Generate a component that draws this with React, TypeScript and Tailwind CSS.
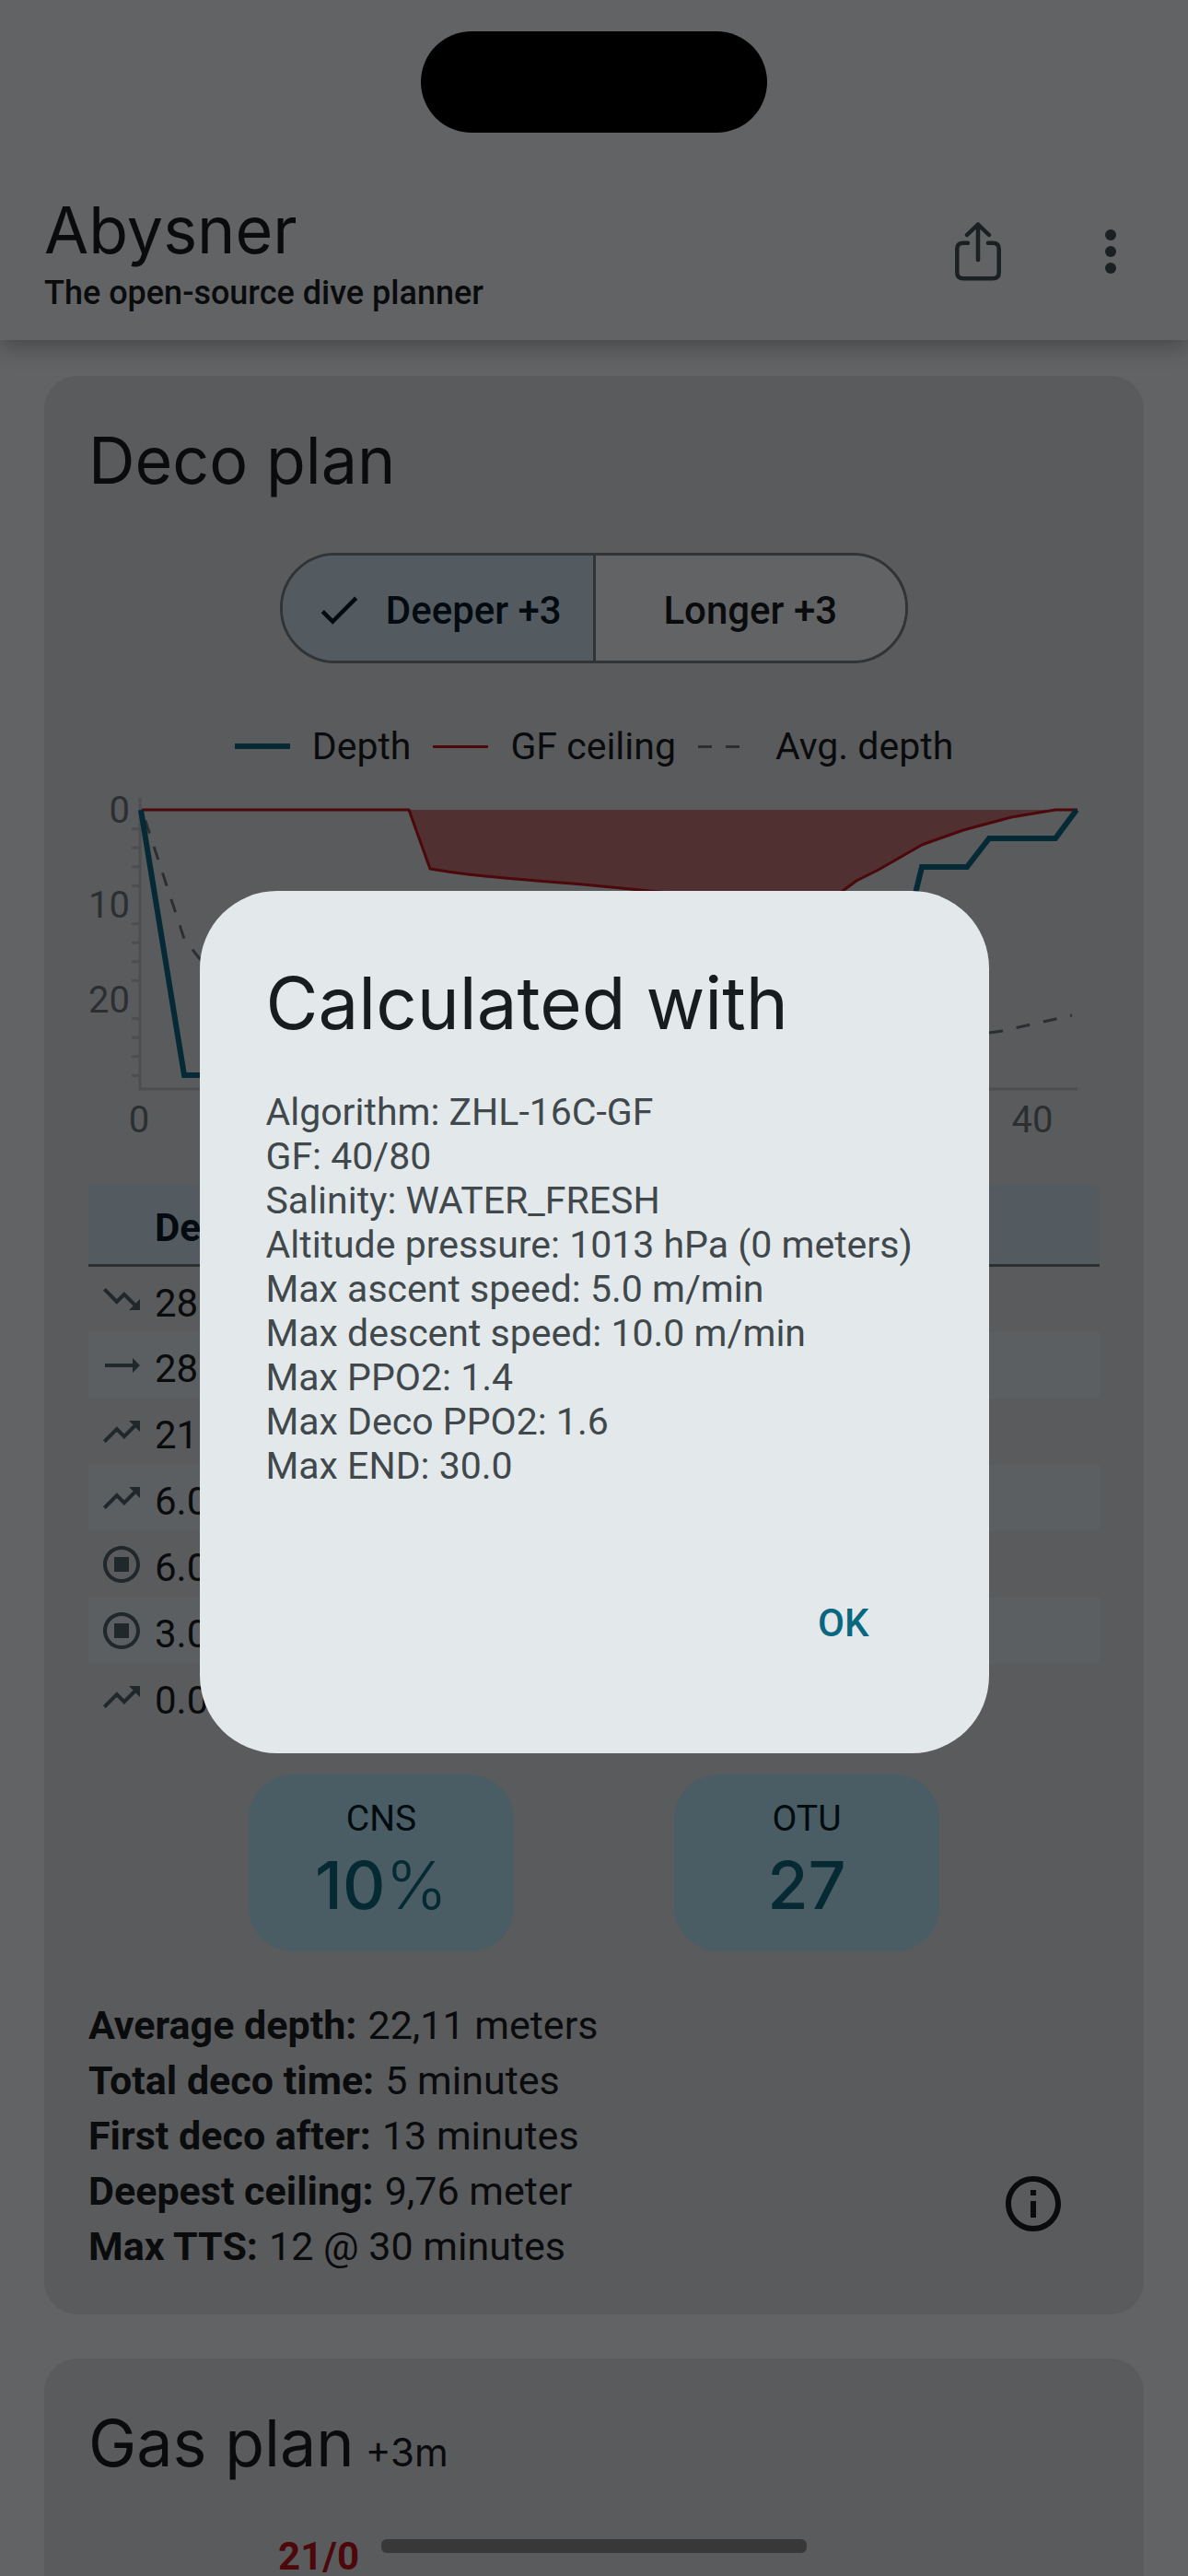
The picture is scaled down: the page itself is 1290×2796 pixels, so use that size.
import React from "react";

const rows: [string, string][] = [
  ["down", "28"],
  ["flat", "28"],
  ["up", "21"],
  ["up", "6.0"],
  ["stop", "6.0"],
  ["stop", "3.0"],
  ["up", "0.0"],
];

const iconPaths: Record<string, string> = {
  down: "M16 18l2.29-2.29-4.88-4.88-4 4L2 7.41 3.41 6l6 6 4-4 6.3 6.29L22 12v6z",
  flat: "M22 12l-4-4v3H3v2h15v3z",
  up: "M16 6l2.29 2.29-4.88 4.88-4-4L2 16.59 3.41 18l6-6 4 4 6.3-6.29L22 12V6z",
  stop: "M12 2C6.48 2 2 6.48 2 12s4.48 10 10 10 10-4.48 10-10S17.52 2 12 2zm0 18c-4.42 0-8-3.58-8-8s3.58-8 8-8 8 3.58 8 8-3.58 8-8 8zm4-4H8V8h8v8z",
};

const settings = [
  "Algorithm: ZHL-16C-GF",
  "GF: 40/80",
  "Salinity: WATER_FRESH",
  "Altitude pressure: 1013 hPa (0 meters)",
  "Max ascent speed: 5.0 m/min",
  "Max descent speed: 10.0 m/min",
  "Max PPO2: 1.4",
  "Max Deco PPO2: 1.6",
  "Max END: 30.0",
];

const stats = [
  ["Average depth:", "22,11 meters"],
  ["Total deco time:", "5 minutes"],
  ["First deco after:", "13 minutes"],
  ["Deepest ceiling:", "9,76 meter"],
  ["Max TTS:", "12 @ 30 minutes"],
];

const ticks = Array.from({ length: 14 }, (_, i) => i + 1).filter((i) => i % 5 !== 0);

function Chart() {
  return (
    <svg viewBox="0 0 1098 400" className="block w-full overflow-visible" role="img" aria-label="Dive profile" fontFamily="Roboto, sans-serif" fontSize="40">
      <path d="M56 5V321H1074" fill="none" stroke="#4d4e50" strokeWidth="3" />
      {ticks.map((i) => (
        <path key={i} d={`M47 ${18 + i * 20.6}h9`} stroke="#4d4e50" strokeWidth="3" />
      ))}
      <g fill="#2b2f31" textAnchor="end">
        <text x="45" y="32">0</text>
        <text x="45" y="135">10</text>
        <text x="45" y="238">20</text>
      </g>
      <g fill="#2b2f31" textAnchor="middle">
        <text x="55" y="368">0</text>
        <text x="1025" y="368">40</text>
      </g>
      <path d="M348 18L371 82Q400 87 431 90T537 99L620 107L740 118H800L819 106L834 95L858 83L905 56L950 40L1002 26L1050 18Z" fill="#503031" />
      <path d="M58 18L104 158L152 220L400 285L800 285L992 258L1068 241" fill="none" stroke="#2b2f31" strokeWidth="3" strokeDasharray="15 15" strokeDashoffset="18" />
      <path d="M58 18H348L371 82Q400 87 431 90T537 99L620 107L740 118H800L819 106L834 95L858 83L905 56L950 40L1002 26L1050 18H1074" fill="none" stroke="#4c080b" strokeWidth="3" strokeLinejoin="round" />
      <path d="M57 18L104 306H850L905 80H954L978 49H1050L1073 18" fill="none" stroke="#052a35" strokeWidth="6" />
    </svg>
  );
}

function Meter({ label, value, unit }: { label: string; value: string; unit?: string }) {
  return (
    <div className="flex h-[192px] w-[288px] flex-col items-center rounded-[48px] bg-[#4a5d64] pt-6">
      <span className="text-[39px] leading-[48px] text-[#020b0f]">{label}</span>
      <span className="font-[Inter,sans-serif] text-[72px] leading-[96px] font-medium text-[#052a33]">
        {value}
        {unit && <span className="font-light">{unit}</span>}
      </span>
    </div>
  );
}

export default function App() {
  return (
    <div className="relative h-screen overflow-hidden bg-[#626365] font-[Roboto,sans-serif] text-[#0a0b0c]">
      <header className="relative bg-[#626365] shadow-[0_6px_24px_rgba(0,0,0,0.3)]">
        <div className="flex justify-center pt-[34px]">
          <div className="h-[110px] w-[376px] rounded-full bg-black" />
        </div>
        <div className="flex h-[225px] items-start justify-between pt-[66px] pr-[60px] pl-12">
          <div>
            <h1 className="font-[Inter,sans-serif] text-[70px] leading-[80px] font-normal">Abysner</h1>
            <p className="pt-1 text-[36px] leading-[48px] font-medium">The open-source dive planner</p>
          </div>
          <div className="flex items-center gap-[93px] pt-[27px] text-[#1b2022]">
            <button aria-label="Share">
              <svg width="54" height="72" viewBox="0 0 54 72" fill="none" stroke="currentColor" strokeWidth="4.5" strokeLinecap="round" strokeLinejoin="round">
                <path d="M16 26.700H11Q4.300 26.700 4.300 33V59Q4.300 65.300 11 65.300H43Q49.700 65.300 49.700 59V33Q49.700 26.700 43 26.700H38M27 45V6.500M15 18L27 6.500L39 18" />
              </svg>
            </button>
            <button aria-label="More options">
              <svg width="48" height="72" viewBox="0 0 48 72" fill="currentColor">
                <circle cx="24" cy="18" r="6" />
                <circle cx="24" cy="36" r="6" />
                <circle cx="24" cy="54" r="6" />
              </svg>
            </button>
          </div>
        </div>
      </header>

      <main className="flex flex-col gap-12 px-12 pt-[39px]">
        <section className="rounded-[36px] bg-[#5a5b5d] px-12 pt-[50px] pb-[44px]">
          <h2 className="font-[Inter,sans-serif] text-[70px] leading-[84px] font-normal">Deco plan</h2>
          <div className="mx-auto mt-[58px] flex h-[120px] w-[682px] overflow-hidden rounded-full border-[3px] border-[#303436] text-[42px] font-medium">
            <button aria-pressed="true" className="flex flex-1 items-center justify-center gap-6 border-r-[3px] border-[#303436] bg-[#535b61] pt-1 text-[#030b10]">
              <svg width="54" height="54" viewBox="0 0 24 24" fill="currentColor">
                <path d="M9 16.170L4.830 12l-1.420 1.410L9 19 21 7l-1.410-1.410z" />
              </svg>
              Deeper +3
            </button>
            <button aria-pressed="false" className="flex-1 bg-[#626365] pt-1">Longer +3</button>
          </div>
          <ul className="mt-[63px] flex items-center justify-center gap-6 text-[41px] leading-[54px]">
            <li className="flex items-center gap-6">
              <span className="h-[6px] w-[60px] bg-[#052a35]" />
              Depth
            </li>
            <li className="flex items-center gap-6">
              <span className="h-[3px] w-[60px] bg-[#4c080b]" />
              GF ceiling
            </li>
            <li className="flex items-center gap-6">
              <span className="flex w-[60px] gap-[15px]">
                <span className="h-[3px] w-[15px] bg-[#2b2f31]" />
                <span className="h-[3px] w-[15px] bg-[#2b2f31]" />
              </span>
              Avg. depth
            </li>
          </ul>
          <div className="mt-6">
            <Chart />
          </div>

          <table className="mt-[25px] w-full text-[42px]">
            <thead>
              <tr className="h-[87px] border-b-[3px] border-[#2b3033] bg-[#535b61] text-left text-[#030b10]">
                <th className="w-[72px]" aria-label="Type" />
                <th className="pt-2 font-bold">Depth</th>
              </tr>
            </thead>
            <tbody>
              {rows.map(([icon, depth], i) => (
                <tr key={i} className="h-[72px] even:bg-[#5b5f62]">
                  <td className="pl-3">
                    <svg width="48" height="48" viewBox="0 0 24 24" className="fill-[#20282c]">
                      <path d={iconPaths[icon]} />
                    </svg>
                  </td>
                  <td className="pt-2">{depth}</td>
                </tr>
              ))}
            </tbody>
          </table>

          <div className="mt-[48px] flex justify-center gap-[174px]">
            <Meter label="CNS" value="10" unit="%" />
            <Meter label="OTU" value="27" />
          </div>

          <div className="mt-[50px] flex items-end justify-between">
            <dl className="text-[43px] leading-[60px]">
              {stats.map(([k, v]) => (
                <div key={k} className="flex gap-3">
                  <dt className="font-bold">{k}</dt>
                  <dd>{v}</dd>
                </div>
              ))}
            </dl>
            <button aria-label="Calculation details" className="p-9 pb-[40px]">
              <svg width="72" height="72" viewBox="0 0 24 24" fill="currentColor">
                <path d="M11 7h2v2h-2zm0 4h2v6h-2zm1-9C6.480 2 2 6.480 2 12s4.480 10 10 10 10-4.480 10-10S17.520 2 12 2zm0 18c-4.410 0-8-3.590-8-8s3.590-8 8-8 8 3.590 8 8-3.590 8-8 8z" />
              </svg>
            </button>
          </div>
        </section>

        <section className="rounded-[36px] bg-[#5a5b5d] px-12 pt-[50px] pb-12">
          <h2 className="flex items-baseline gap-3 font-[Inter,sans-serif] text-[70px] leading-[84px] font-normal">
            Gas plan <span className="text-[42px] font-normal">+3m</span>
          </h2>
          <div className="mt-[44px] flex items-start gap-6">
            <span className="w-[294px] text-right text-[42px] leading-[54px] font-bold text-[#4c080b]">21/0</span>
            <span className="mt-2 h-[15px] w-[462px] rounded-[6px] bg-[#383838]" />
          </div>
        </section>
      </main>

      <div className="absolute inset-0 flex items-center justify-center pt-[74px]">
        <div role="dialog" aria-modal="true" aria-labelledby="dialog-title" className="w-[857px] max-w-full rounded-[84px] bg-[#e3e8eb] px-[72px] pt-[74px] pb-[82px]">
          <h2 id="dialog-title" className="font-[Inter,sans-serif] text-[78px] leading-[96px] font-normal text-[#171d1f]">Calculated with</h2>
          <div className="mt-[46px] text-[41px] leading-[48px] whitespace-nowrap text-[#40484c]">
            {settings.map((s) => (
              <p key={s}>{s}</p>
            ))}
          </div>
          <div className="mt-[86px] flex justify-end">
            <button className="h-[120px] px-[58px] text-[42px] font-medium text-[#0a6780]">OK</button>
          </div>
        </div>
      </div>
    </div>
  );
}
